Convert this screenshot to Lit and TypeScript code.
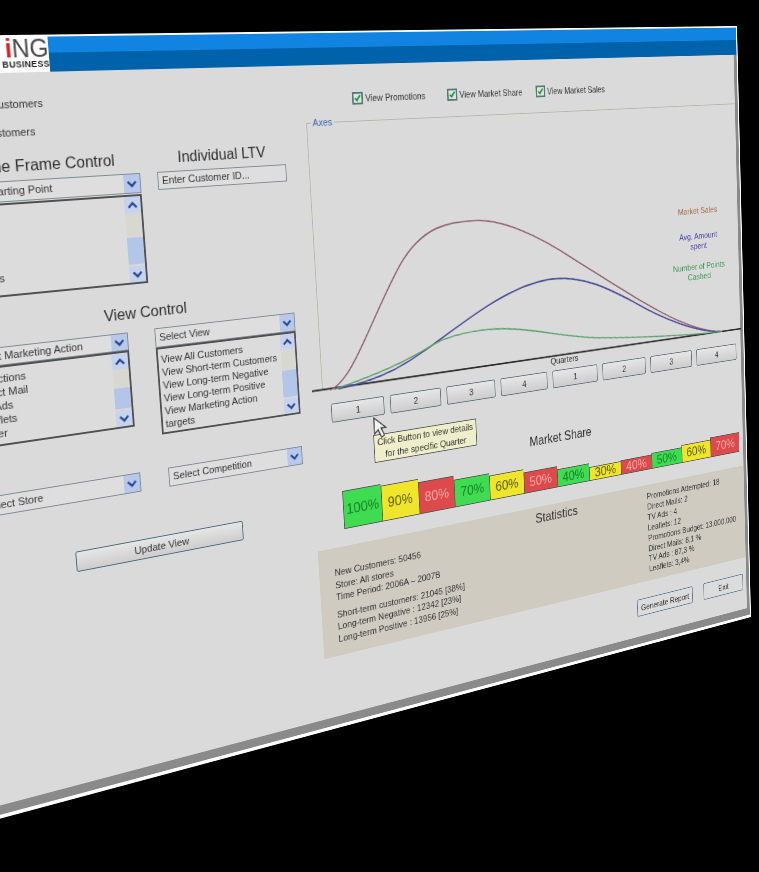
import { LitElement, html, css, svg } from "lit";
import { customElement } from "lit/decorators.js";
import { styleMap } from "lit/directives/style-map.js";

const W = 1120;
const H = 800;

// corners of the window on screen, clockwise from top left
const quad = [
    [-150, 37],
    [737, 26],
    [751, 617],
    [-72, 838],
];

function quadMatrix(): string {
    const [[x0, y0], [x1, y1], [x2, y2], [x3, y3]] = quad;
    const dx1 = x1 - x2;
    const dx2 = x3 - x2;
    const sx = x0 - x1 + x2 - x3;
    const dy1 = y1 - y2;
    const dy2 = y3 - y2;
    const sy = y0 - y1 + y2 - y3;
    const det = dx1 * dy2 - dx2 * dy1;
    const g = (sx * dy2 - dx2 * sy) / det;
    const h = (dx1 * sy - sx * dy1) / det;
    const a = x1 - x0 + g * x1;
    const b = x3 - x0 + h * x3;
    const d = y1 - y0 + g * y1;
    const e = y3 - y0 + h * y3;
    const m = [a / W, d / W, 0, g / W, b / H, e / H, 0, h / H, 0, 0, 1, 0, x0, y0, 0, 1];
    return `matrix3d(${m.join(",")})`;
}

const chevronDown = svg`<svg viewBox="0 0 12 8" width="12" height="8"><path d="M1.5 1.5 6 6l4.5-4.5" fill="none" stroke="#24498f" stroke-width="2.4"/></svg>`;
const chevronUp = svg`<svg viewBox="0 0 12 8" width="12" height="8"><path d="M1.5 6.5 6 2l4.5 4.5" fill="none" stroke="#24498f" stroke-width="2.4"/></svg>`;
const checkMark = svg`<svg viewBox="0 0 12 12" width="11" height="11"><path d="M2 6.5 5 9.5 10 2.5" fill="none" stroke="#1f9a35" stroke-width="2.6"/></svg>`;

const bars = [
    { t: "100%", c: "green", h: 45 },
    { t: "90%", c: "yellow", h: 43 },
    { t: "80%", c: "red", h: 39 },
    { t: "70%", c: "green", h: 34 },
    { t: "60%", c: "yellow", h: 31 },
    { t: "50%", c: "red", h: 27 },
    { t: "40%", c: "green", h: 23 },
    { t: "30%", c: "yellow", h: 18 },
    { t: "40%", c: "red", h: 19 },
    { t: "50%", c: "green", h: 21 },
    { t: "60%", c: "yellow", h: 24 },
    { t: "70%", c: "red", h: 27 },
];

@customElement("app-root")
export class AppRoot extends LitElement {
    select(text: string, cls = "") {
        return html`<div class="select ${cls}">
            <span class="select_text">${text}</span>
            <span class="select_arrow">${chevronDown}</span>
        </div>`;
    }

    list(items: string[], thumb: number, cls = "") {
        return html`<div class="list ${cls}">
            <div class="list_items">${items.map((i) => html`<div>${i}</div>`)}</div>
            <div class="scroll">
                <span class="scroll_btn">${chevronUp}</span>
                <span class="scroll_track"><i style=${styleMap({ height: thumb + "px" })}></i></span>
                <span class="scroll_btn">${chevronDown}</span>
            </div>
        </div>`;
    }

    render() {
        return html`
            <div class="window" style=${styleMap({ transform: quadMatrix() })}>
                <div class="header">
                    <div class="logo">
                        <div class="logo_name"><b>i</b>NG</div>
                        <div class="logo_sub">BUSINESS</div>
                    </div>
                    <div class="band"><div class="band_light"></div><div class="band_dark"></div></div>
                </div>
                <div class="body">
                    <div class="left">
                        <div class="nav">
                            <div>New Customers</div>
                            <div>All Customers</div>
                        </div>
                        <div class="row_time">
                            <div>
                                <div class="title time_title">Time Frame Control</div>
                                ${this.select("Select Starting Point", "select_start")}
                                ${this.list(["Day", "Week", "Month", "Year", "Quarters"], 28, "list_time")}
                            </div>
                            <div>
                                <div class="title">Individual LTV</div>
                                <div class="input">Enter Customer ID...</div>
                            </div>
                        </div>
                        <div class="title view_title">View Control</div>
                        <div class="row_view">
                            <div class="col_marketing">
                                ${this.select("Select Marketing Action", "select_short")}
                                ${this.list(["All Actions", "Direct Mail", "TV Ads", "Leaflets", "Other"], 22, "list_marketing")}
                            </div>
                            <div>
                                ${this.select("Select View")}
                                ${this.list(
                                    [
                                        "View All Customers",
                                        "View Short-term Customers",
                                        "View Long-term Negative",
                                        "View Long-term Positive",
                                        "View Marketing Action",
                                        "targets",
                                    ],
                                    30,
                                    "list_view"
                                )}
                            </div>
                        </div>
                        <div class="row_store">
                            ${this.select("Select Store", "select_store")}
                            ${this.select("Select Competition")}
                        </div>
                        <div class="btn update">Update View</div>
                    </div>
                    <div class="right">
                        <div class="checks">
                            ${["View Promotions", "View Market Share", "View Market Sales"].map(
                                (t) => html`<label class="check"><span class="check_box">${checkMark}</span>${t}</label>`
                            )}
                        </div>
                        <div class="axes">
                            <span class="axes_legend">Axes</span>
                            <svg class="chart" viewBox="461 96 653 310" width="653" height="310">
                                <path d="M466 400.5 L1114 399" fill="none" stroke="#2a2a2a" stroke-width="2" />
                                <path d="M489 402 C520 395 545 330 590 268 C625 222 665 224 694 224 C735 224 790 250 840 282 C890 312 950 350 1000 374 C1035 390 1060 398 1081 399" fill="none" stroke="#8f5f70" stroke-width="1.7" />
                                <path d="M500 402 C560 398 590 385 629 366 C690 335 750 304 808 304 C855 304 895 325 933 345 C980 372 1040 397 1081 399" fill="none" stroke="#4d4d98" stroke-width="1.9" />
                                <path d="M495 402 C550 392 590 382 629 366 C650 358 675 356 701 356 C760 356 815 378 877 385 C930 391 1030 399 1081 399" fill="none" stroke="#58a06e" stroke-width="1.7" />
                            </svg>
                            <div class="legend legend_sales">Market Sales</div>
                            <div class="legend legend_avg">Avg. Amount<br />spent</div>
                            <div class="legend legend_points">Number of Points<br />Cashed</div>
                        </div>
                        <div class="quarters_label">Quarters</div>
                        <div class="quarters">
                            ${["1", "2", "3", "4", "1", "2", "3", "4"].map((q) => html`<div class="btn quarter">${q}</div>`)}
                            <div class="tooltip">Click Button to view details<br />for the specific Quarter</div>
                            <svg class="cursor" viewBox="0 0 18 28" width="18" height="28">
                                <path d="M1 1 L1 20 L6 15.5 L10 25 L14 23 L10 14 L16.5 14 Z" fill="#f4f4f4" stroke="#333" stroke-width="1.3" />
                            </svg>
                        </div>
                        <div class="share_title">Market Share</div>
                        <div class="bars">
                            ${bars.map(
                                (b) => html`<div class="bar ${b.c}" style=${styleMap({ height: b.h + "px" })}>${b.t}</div>`
                            )}
                        </div>
                        <div class="stats">
                            <div class="stats_left">
                                <div>New Customers: 50456</div>
                                <div>Store: All stores</div>
                                <div>Time Period: 2006A – 2007B</div>
                                <div class="stats_gap">Short-term customers: 21045 [38%]</div>
                                <div>Long-term Negative : 12342 [23%]</div>
                                <div>Long-term Positive : 13956 [25%]</div>
                            </div>
                            <div class="stats_title">Statistics</div>
                            <div class="stats_right">
                                <div>Promotions Attempted: 18</div>
                                <div>Direct Mails: 2</div>
                                <div>TV Ads : 4</div>
                                <div>Leaflets: 12</div>
                                <div>Promotions Budget: 13.000.000</div>
                                <div>Direct Mails: 8,1 %</div>
                                <div>TV Ads : 87,3 %</div>
                                <div>Leaflets: 3,4%</div>
                            </div>
                        </div>
                        <div class="actions">
                            <div class="btn action report">Generate Report</div>
                            <div class="btn action exit">Exit</div>
                        </div>
                    </div>
                </div>
            </div>
        `;
    }

    static styles = css`
        :host {
            display: block;
            position: relative;
            width: 759px;
            height: 872px;
            overflow: hidden;
            background: #000;
            font-family: "Liberation Sans", Arial, sans-serif;
            font-size: 11.2px;
            color: #333;
        }
        .window {
            position: absolute;
            left: 0;
            top: 0;
            width: 1120px;
            height: 800px;
            box-sizing: border-box;
            padding: 2px 2px 4px 0;
            background: #fff;
            transform-origin: 0 0;
            display: flex;
            flex-direction: column;
            filter: blur(0.4px);
        }
        .header {
            height: 35px;
            display: flex;
            flex: none;
            background: #fff;
        }
        .logo {
            width: 192px;
            text-align: right;
            color: #333;
        }
        .logo_name {
            font-size: 25px;
            line-height: 22px;
            color: #4a4a4a;
        }
        .logo_name b {
            color: #d81f26;
        }
        .logo_sub {
            font-size: 9px;
            font-weight: bold;
            line-height: 11px;
            letter-spacing: 0.3px;
            color: #222;
        }
        .band {
            flex: 1;
            display: flex;
            flex-direction: column;
        }
        .band_light {
            height: 16px;
            background: #1184e2;
        }
        .band_dark {
            flex: 1;
            background: #0062ab;
        }
        .body {
            flex: 1;
            display: grid;
            grid-template-columns: 461px 652px;
            background: #dadada;
            border-right: 5px solid #8a8a8a;
            border-bottom: 10px solid #8a8a8a;
        }
        .left {
            padding: 24px 0 0 70px;
        }
        .nav {
            margin-left: 32px;
            display: flex;
            flex-direction: column;
            gap: 14px;
            line-height: 14px;
        }
        .title {
            font-size: 16.5px;
            line-height: 18px;
            text-align: center;
            color: #2e2e2e;
            margin-bottom: 6px;
            white-space: nowrap;
        }
        .time_title {
            padding-left: 10px;
        }
        .row_time {
            margin-top: 17px;
            display: grid;
            grid-template-columns: 210px 152px;
            column-gap: 19px;
        }
        .select {
            height: 21px;
            box-sizing: border-box;
            display: flex;
            align-items: stretch;
            justify-content: space-between;
            border: 1px solid #7c8c94;
            background: #dedede;
            line-height: 19px;
        }
        .select_short {
            height: 19px;
            margin-top: 1px;
            line-height: 17px;
        }
        .select_text {
            padding-left: 4px;
            white-space: nowrap;
        }
        .select_start .select_text {
            padding-left: 12px;
        }
        .select_short .select_text {
            padding-left: 13px;
        }
        .select_store .select_text {
            padding-left: 14px;
        }
        .select_arrow {
            width: 18px;
            background: #b8c8ea;
            display: flex;
            align-items: center;
            justify-content: center;
        }
        .list {
            display: flex;
            justify-content: space-between;
            box-sizing: border-box;
            border: 2px solid #505050;
            background: #dcdcdc;
        }
        .list_items {
            padding: 4px 0 0 3px;
            line-height: 14px;
            white-space: nowrap;
        }
        .list_time {
            height: 94px;
            margin-top: 1px;
        }
        .list_time .list_items {
            padding: 10px 0 0 12px;
        }
        .list_marketing {
            height: 82px;
        }
        .list_marketing .list_items {
            padding: 4px 0 0 15px;
        }
        .list_view {
            height: 94px;
        }
        .scroll {
            width: 18px;
            display: flex;
            flex-direction: column;
            flex: none;
        }
        .scroll_btn {
            height: 17px;
            flex: none;
            background: #c6d2ee;
            display: flex;
            align-items: center;
            justify-content: center;
        }
        .scroll_track {
            flex: 1;
            display: flex;
            flex-direction: column;
            justify-content: flex-end;
            padding-bottom: 2px;
            background: #d8d8d2;
        }
        .scroll_track i {
            display: block;
            background: #b4c5ea;
        }
        .input {
            height: 19px;
            box-sizing: border-box;
            margin-top: 1px;
            border: 1px solid #7c8c94;
            background: #dedede;
            padding-left: 4px;
            line-height: 17px;
        }
        .view_title {
            margin: 21px 0 10px;
            width: 410px;
        }
        .row_view {
            display: grid;
            grid-template-columns: 181px 167px;
            column-gap: 30px;
            margin-left: 2px;
        }
        .row_store {
            margin: 37px 0 0 2px;
            display: grid;
            grid-template-columns: 183px 162px;
            column-gap: 32px;
        }
        .btn {
            box-sizing: border-box;
            display: flex;
            align-items: center;
            justify-content: center;
            background: linear-gradient(#e6e6e6, #cdcdcd);
            border: 1.5px solid #5c7076;
            border-radius: 2px;
        }
        .update {
            width: 193px;
            height: 22px;
            margin: 52px 0 0 107px;
            border-color: #48687a;
        }
        .right {
            padding-top: 30px;
        }
        .checks {
            display: flex;
            padding-left: 78px;
            height: 15px;
            font-size: 10.7px;
        }
        .check {
            width: 127px;
            display: flex;
            align-items: center;
            gap: 3px;
            white-space: nowrap;
        }
        .check_box {
            width: 14px;
            height: 14px;
            box-sizing: border-box;
            border: 2px solid #55787e;
            background: #e0e4e0;
            display: flex;
            align-items: center;
            justify-content: center;
        }
        .axes {
            position: relative;
            margin: 18px 0 0 18px;
            height: 300px;
            box-sizing: border-box;
            border-left: 1px solid #b8b6aa;
            border-top: 1px solid #b8b6aa;
            display: flex;
            flex-direction: column;
            align-items: flex-end;
            padding: 129px 14px 0 0;
        }
        .axes_legend {
            position: absolute;
            left: 5px;
            top: -8px;
            padding: 0 2px;
            background: #dadada;
            color: #3f63a8;
            line-height: 14px;
        }
        .chart {
            position: absolute;
            left: -19px;
            top: -5px;
        }
        .legend {
            position: relative;
            width: 110px;
            text-align: center;
            line-height: 13px;
            font-size: 11.5px;
            white-space: nowrap;
        }
        .legend_sales {
            color: #a4714f;
        }
        .legend_avg {
            margin-top: 20px;
            color: #4a3fb0;
        }
        .legend_points {
            margin-top: 14px;
            color: #3f9a5a;
        }
        .quarters_label {
            height: 12px;
            line-height: 12px;
            padding-left: 338px;
            font-size: 11px;
        }
        .quarters {
            position: relative;
            margin: 6px 0 0 28px;
            display: flex;
            gap: 8px;
        }
        .quarter {
            width: 70px;
            height: 22px;
            flex: none;
        }
        .tooltip {
            position: absolute;
            left: 53px;
            top: 44px;
            width: 143px;
            height: 33px;
            box-sizing: border-box;
            border: 1px solid #555;
            background: #eeeecb;
            text-align: center;
            line-height: 15px;
            padding-top: 1px;
            white-space: nowrap;
            color: #333;
        }
        .cursor {
            position: absolute;
            left: 54px;
            top: 23px;
        }
        .share_title {
            margin-top: 53px;
            padding-left: 18px;
            width: 680px;
            box-sizing: border-box;
            text-align: center;
            font-size: 16px;
            line-height: 20px;
            color: #2e2e2e;
        }
        .bars {
            margin: 8px 0 0 36px;
            height: 45px;
            display: grid;
            grid-template-columns: repeat(12, 50.75px);
            align-items: end;
            width: 609px;
        }
        .bar {
            box-sizing: border-box;
            display: flex;
            align-items: center;
            justify-content: center;
            font-size: 17px;
            border: 1px solid #555;
            border-width: 1px 0 1px 1px;
            white-space: nowrap;
        }
        .green {
            background: #3fdb50;
            color: #17812a;
        }
        .yellow {
            background: #efe62c;
            color: #5c5a14;
        }
        .red {
            background: #dd4a4c;
            color: #f0a9a6;
        }
        .stats {
            margin-top: 20px;
            height: 128px;
            box-sizing: border-box;
            padding-left: 20px;
            background: #cfcbc0;
            display: grid;
            grid-template-columns: 243px 150px auto;
            line-height: 14.5px;
            color: #333;
        }
        .stats_left {
            padding-top: 22px;
            white-space: nowrap;
        }
        .stats_gap {
            margin-top: 6px;
        }
        .stats_title {
            padding-top: 4px;
            font-size: 16.5px;
            line-height: 20px;
            text-align: center;
        }
        .stats_right {
            margin-left: 70px;
            padding-top: 9px;
            font-size: 10.9px;
            line-height: 13.9px;
            white-space: nowrap;
        }
        .actions {
            margin-top: 22px;
            padding-right: 6px;
            display: flex;
            justify-content: flex-end;
            gap: 19px;
        }
        .action {
            height: 23px;
            font-size: 11px;
            border-color: #5a7a95;
            background: #dcdcdc;
        }
        .report {
            width: 95px;
        }
        .exit {
            width: 71px;
        }
    `;
}
